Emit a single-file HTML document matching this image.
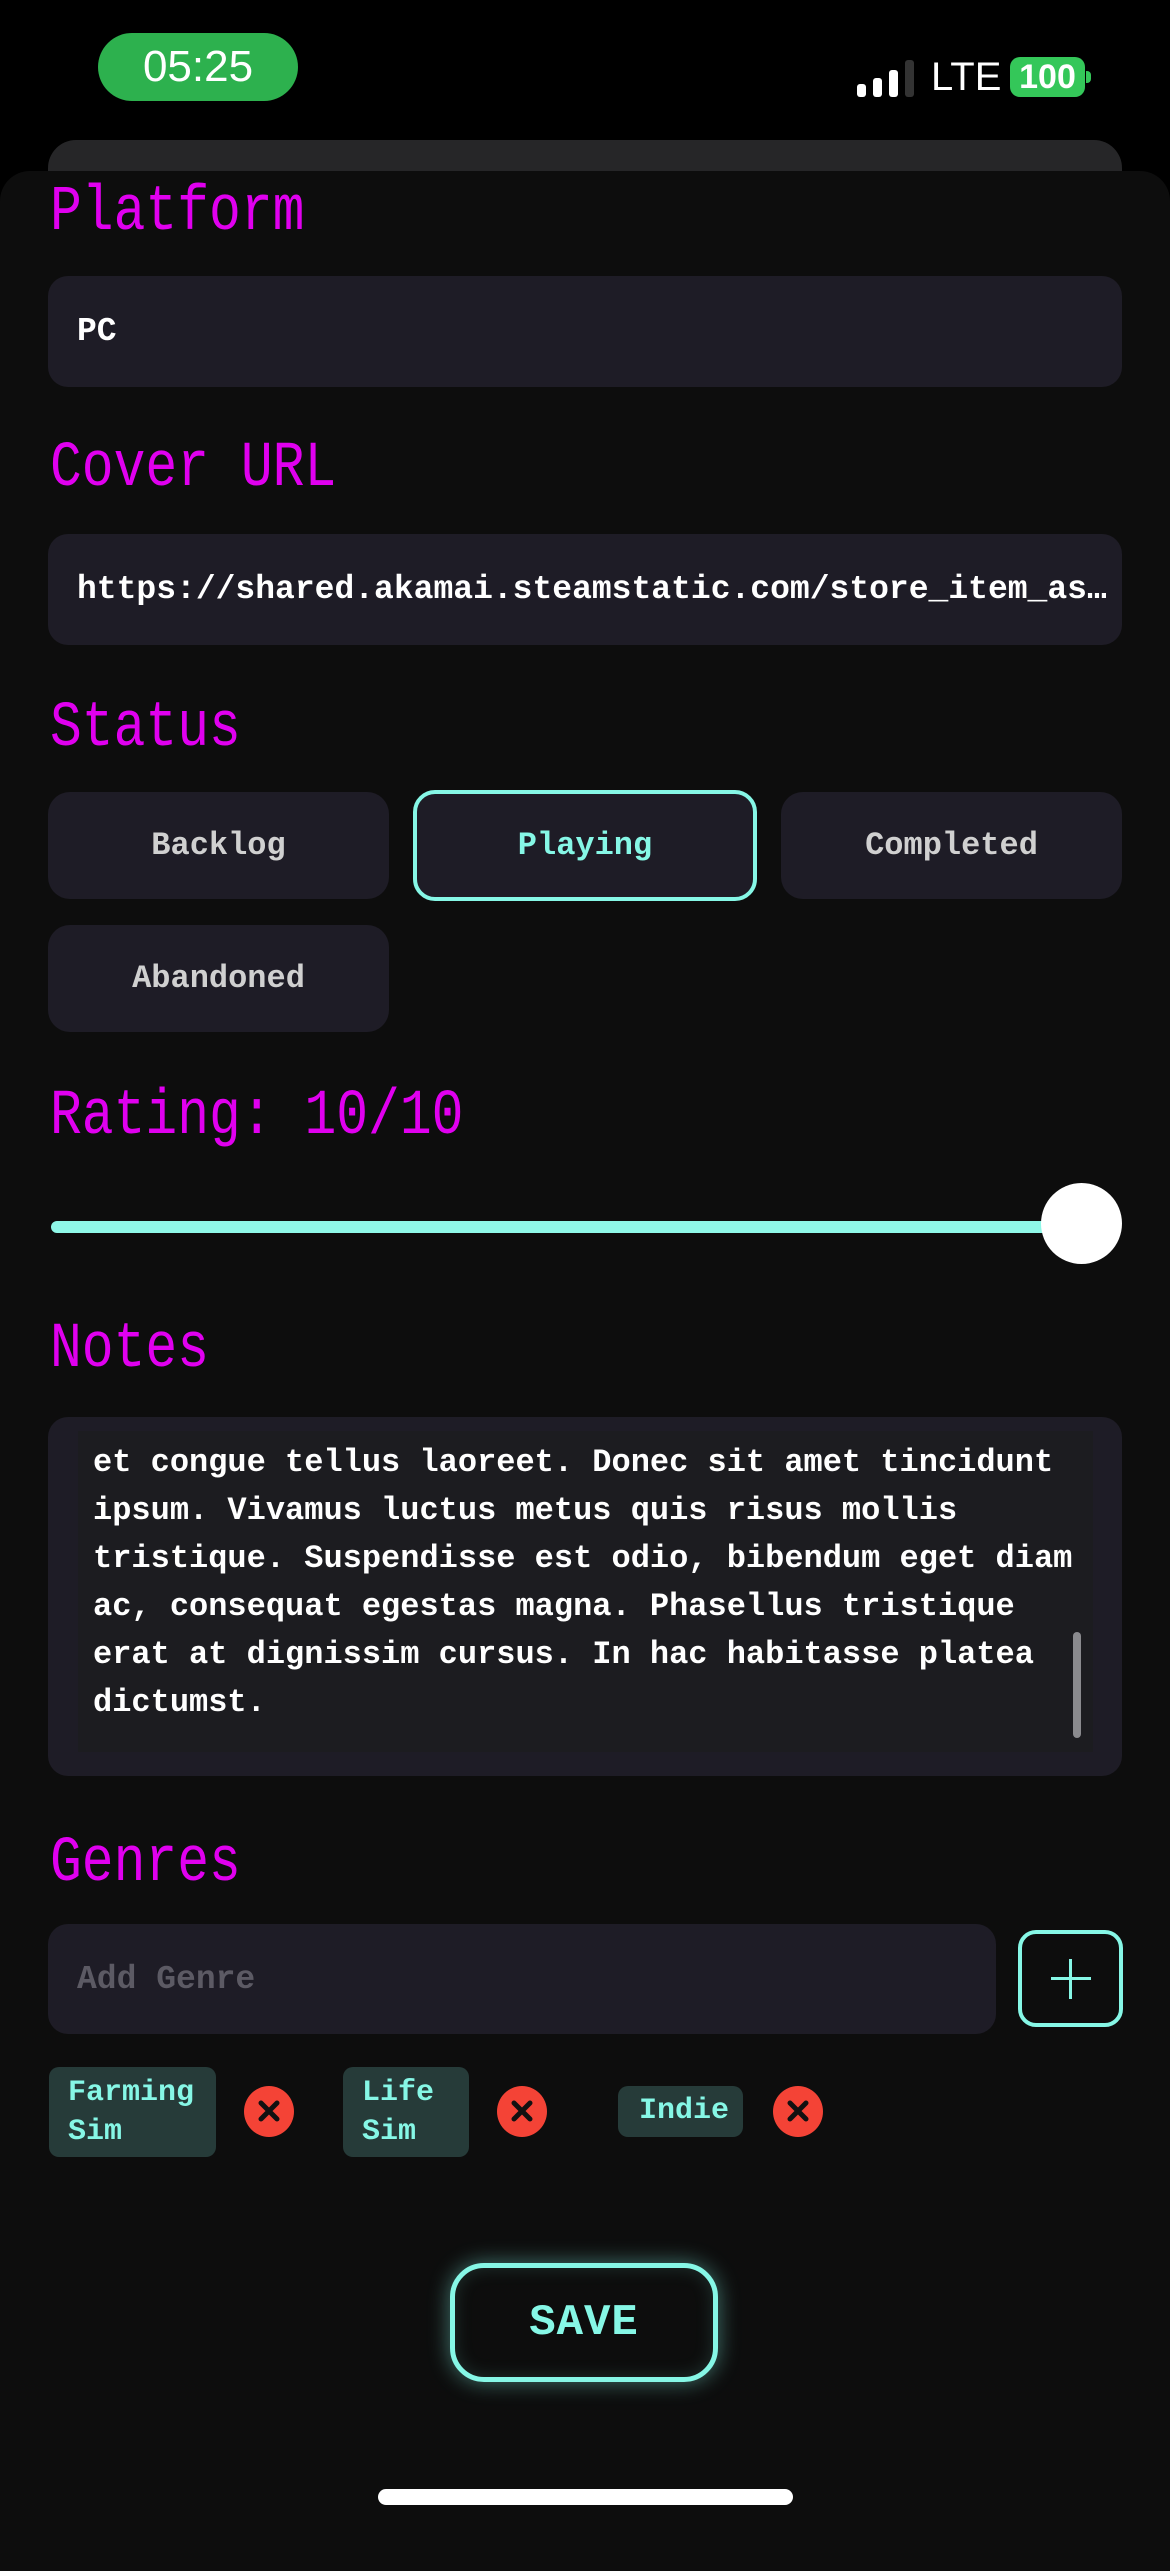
<!DOCTYPE html>
<html><head><meta charset="utf-8"><style>
*{margin:0;padding:0;box-sizing:border-box}
body{width:1170px;height:2532px;background:#000;position:relative;overflow:hidden;font-family:"Liberation Mono","DejaVu Sans Mono",monospace}
.a{position:absolute}
.lbl{position:absolute;left:50px;font-size:53px;line-height:53px;color:#e000ef;transform:scaleY(1.2);transform-origin:top left;white-space:nowrap}
.box{position:absolute;left:48px;width:1074px;background:#1e1c26;border-radius:20px}
.in{position:absolute;left:48px;width:1074px;height:111px;background:#1e1c26;border-radius:20px;display:flex;align-items:center;padding-left:29px;color:#fff;font-size:33px;font-weight:bold;white-space:nowrap}
.btn{position:absolute;width:341px;height:107px;background:#1e1c26;border-radius:22px;display:flex;align-items:center;justify-content:center;color:#d0d0d0;font-size:32px;font-weight:bold}
.chip{position:absolute;background:#263b39;border-radius:10px;color:#86f7e6;font-size:30px;line-height:39px;padding-left:19px;font-weight:bold}
.x{position:absolute;width:50px;height:51px;border-radius:50%;background:#f44336}
</style></head><body>
<div class="a" style="left:98px;top:33px;width:200px;height:68px;border-radius:34px;background:#2db14e;color:#fff;font-family:'Liberation Sans',sans-serif;font-size:44px;line-height:68px;text-align:center">05:25</div>
<div class="a" style="left:857px;top:84px;width:9px;height:13px;border-radius:3px;background:#fff"></div>
<div class="a" style="left:873px;top:78px;width:9px;height:19px;border-radius:3px;background:#fff"></div>
<div class="a" style="left:889px;top:70px;width:9px;height:27px;border-radius:3px;background:#fff"></div>
<div class="a" style="left:905px;top:60px;width:9px;height:37px;border-radius:3px;background:#333"></div>
<div class="a" style="left:931px;top:57px;font-family:'Liberation Sans',sans-serif;font-size:40px;line-height:40px;color:#fff">LTE</div>
<div class="a" style="left:1010px;top:57px;width:75px;height:40px;border-radius:10px;background:#34c759;color:#fff;font-family:'Liberation Sans',sans-serif;font-weight:bold;font-size:34px;line-height:40px;text-align:center">100</div>
<div class="a" style="left:1086px;top:71px;width:5px;height:12px;border-radius:0 4px 4px 0;background:#34c759"></div>

<div class="a" style="left:48px;top:140px;width:1074px;height:80px;border-radius:28px;background:#262628"></div>
<div class="a" style="left:0;top:171px;width:1170px;height:2400px;border-radius:30px 30px 0 0;background:#0d0d0d"></div>

<div class="lbl" style="top:181px">Platform</div>
<div class="in" style="top:276px">PC</div>
<div class="lbl" style="top:437px">Cover URL</div>
<div class="in" style="top:534px">https://shared.akamai.steamstatic.com/store_item_as…</div>
<div class="lbl" style="top:697px">Status</div>
<div class="btn" style="left:48px;top:792px">Backlog</div>
<div class="btn" style="left:413px;top:790px;width:344px;height:111px;border:4px solid #86f7e6;color:#86f7e6">Playing</div>
<div class="btn" style="left:781px;top:792px">Completed</div>
<div class="btn" style="left:48px;top:925px">Abandoned</div>
<div class="lbl" style="top:1085px">Rating: 10/10</div>
<div class="a" style="left:51px;top:1221px;width:1040px;height:12px;border-radius:6px;background:#8ff8e8"></div>
<div class="a" style="left:1041px;top:1183px;width:81px;height:81px;border-radius:50%;background:#fff"></div>
<div class="lbl" style="top:1318px">Notes</div>
<div class="box" style="top:1417px;height:359px"></div>
<div class="a" style="left:78px;top:1431px;width:1015px;height:321px;background:#1c1c20"></div>
<div class="a" style="left:93px;top:1439px;color:#fff;font-size:32px;line-height:48px;font-weight:bold;white-space:pre">et congue tellus laoreet. Donec sit amet tincidunt
ipsum. Vivamus luctus metus quis risus mollis
tristique. Suspendisse est odio, bibendum eget diam
ac, consequat egestas magna. Phasellus tristique
erat at dignissim cursus. In hac habitasse platea
dictumst.</div>
<div class="a" style="left:1073px;top:1632px;width:8px;height:106px;border-radius:4px;background:#8a8a8e"></div>
<div class="lbl" style="top:1832px">Genres</div>
<div class="in" style="top:1924px;width:948px;height:110px;color:#5c5a64">Add Genre</div>
<div class="a" style="left:1018px;top:1930px;width:105px;height:97px;border:4px solid #86f7e6;border-radius:18px"></div>
<div class="a" style="left:1051px;top:1977px;width:40px;height:3px;background:#86f7e6"></div>
<div class="a" style="left:1069px;top:1959px;width:3px;height:40px;background:#86f7e6"></div>

<div class="chip" style="left:49px;top:2067px;width:167px;height:90px;padding-top:7px">Farming<br>Sim</div>
<div class="x" style="left:244px;top:2086px"></div>
<div class="chip" style="left:343px;top:2067px;width:126px;height:90px;padding-top:7px">Life<br>Sim</div>
<div class="x" style="left:497px;top:2086px"></div>
<div class="chip" style="left:618px;top:2086px;width:125px;height:51px;padding-top:6px;padding-left:21px">Indie</div>
<div class="x" style="left:773px;top:2086px"></div>
<svg class="a" style="left:0;top:0" width="1170" height="2532">
<g stroke="#111" stroke-width="5" stroke-linecap="round">
<path d="M261 2103l16 16M277 2103l-16 16"/>
<path d="M514 2103l16 16M530 2103l-16 16"/>
<path d="M790 2103l16 16M806 2103l-16 16"/>
</g></svg>

<div class="a" style="left:450px;top:2263px;width:268px;height:119px;border:5px solid #86f7e6;border-radius:34px;box-shadow:0 0 22px rgba(134,247,230,.45),inset 0 0 18px rgba(134,247,230,.15);display:flex;align-items:center;justify-content:center;color:#86f7e6;font-size:44px;font-weight:bold;letter-spacing:1px">SAVE</div>
<div class="a" style="left:378px;top:2489px;width:415px;height:16px;border-radius:8px;background:#fff"></div>
</body></html>
